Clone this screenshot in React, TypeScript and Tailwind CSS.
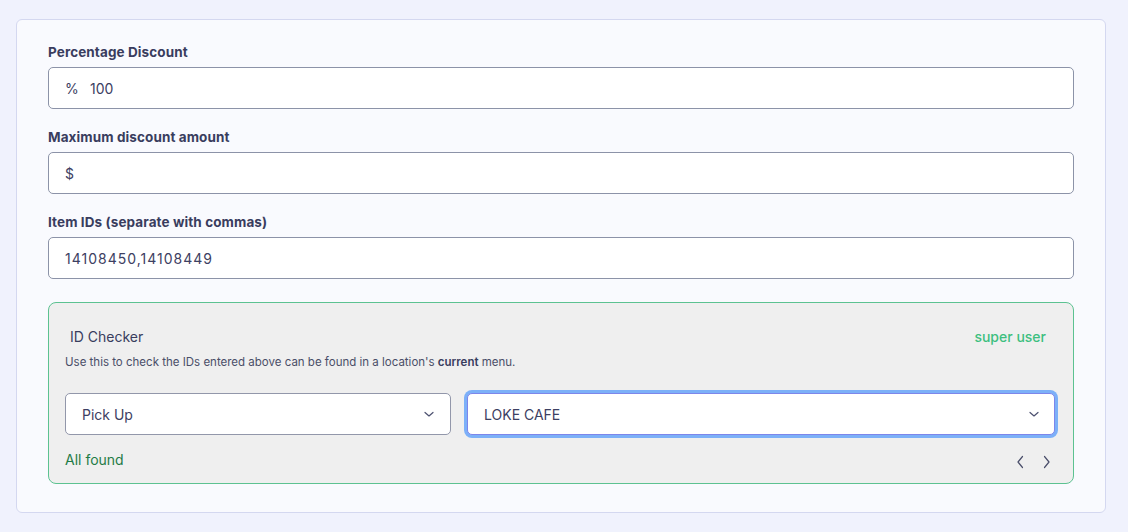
import React from 'react';

function Chevron({ dir = 'down', className = '' }: { dir?: 'down' | 'left' | 'right'; className?: string }) {
  const d = dir === 'down' ? 'M4 6.5l4 3.5 4-3.5' : dir === 'left' ? 'M10.5 2.5L6 8l4.5 5.5' : 'M5.5 2.5L10 8l-4.5 5.5';
  return (
    <svg viewBox="0 0 16 16" className={className} fill="none" stroke="currentColor" strokeWidth={1.2} strokeLinecap="round" strokeLinejoin="round">
      <path d={d} />
    </svg>
  );
}

function Field({ label, prefix, value, wide }: { label: string; prefix?: string; value?: string; wide?: boolean }) {
  return (
    <div>
      <div className="text-[13.5px] font-bold leading-[18px] tracking-[0.1px] text-[#393d5e] mb-[6px]">{label}</div>
      <div className="h-[42px] flex items-center px-4 bg-white border border-[#8c93a8] rounded-[5px] text-[14px] text-[#3d4062]">
        {prefix && <span className="w-[25px]">{prefix}</span>}
        {value && <span className={wide ? 'tracking-[1px]' : ''}>{value}</span>}
      </div>
    </div>
  );
}

export default function App() {
  return (
    <div className="w-[1128px] h-[532px] bg-[#f0f2fd] pt-[19px] pl-4" style={{ fontFamily: 'Inter, "Noto Sans", sans-serif' }}>
      <div className="w-[1090px] h-[494px] bg-[#f9fafe] border border-[#d4d8f0] rounded-[6px] px-[31px] pt-[23px]">
        <div className="flex flex-col gap-[19px]">
          <Field label="Percentage Discount" prefix="%" value="100" />
          <Field label="Maximum discount amount" prefix="$" />
          <Field label="Item IDs (separate with commas)" value="14108450,14108449" wide />
        </div>

        {/* ID checker */}
        <div className="mt-[23px] h-[182px] bg-[#efefef] border border-[#5cc291] rounded-[8px] pl-4 pr-4 pt-[24px]">
          <div className="flex items-center justify-between pr-[11px]">
            <span className="text-[14px] text-[#393d5e] pl-[5px] leading-[20px]">ID Checker</span>
            <span className="text-[14px] text-[#3dbf80] font-medium leading-[20px]">super user</span>
          </div>
          <div className="mt-[7px] text-[11.5px] leading-[16px] text-[#4a4e68]">
            Use this to check the IDs entered above can be found in a location's <b className="font-semibold text-[#393d5e]">current</b> menu.
          </div>
          <div className="mt-[23px] flex gap-4 items-center">
            <div className="w-[386px] h-[42px] bg-white border border-[#9297aa] rounded-[5px] flex items-center justify-between pl-4 pr-[13px] text-[14px] text-[#3d4062]">
              <span>Pick Up</span>
              <Chevron className="w-4 h-4 text-[#4d5170]" />
            </div>
            <div className="flex-1 h-[42px] bg-white border border-[#7d86ea] ring-[3px] ring-[#7cb0f8] rounded-[5px] flex items-center justify-between pl-4 pr-[12px] text-[14px] text-[#3d4062] mr-[2px]">
              <span>LOKE CAFE</span>
              <Chevron className="w-4 h-4 text-[#4d5170]" />
            </div>
          </div>
          <div className="mt-[13px] flex items-center justify-between">
            <span className="text-[14px] text-[#1f7c47]">All found</span>
            <div className="flex items-center gap-[11px] mt-[6px] mr-[2px]">
              <Chevron dir="left" className="w-4 h-4 text-[#4a4e6a]" />
              <Chevron dir="right" className="w-4 h-4 text-[#4a4e6a]" />
            </div>
          </div>
        </div>
      </div>
    </div>
  );
}
